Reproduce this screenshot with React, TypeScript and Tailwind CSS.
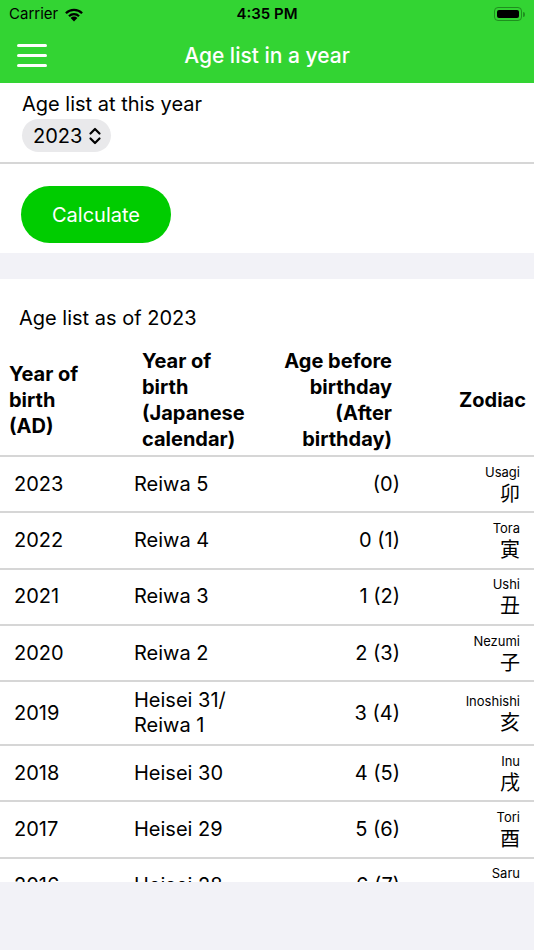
import React from "react";

type AgeRow = {
  ad: string;
  jp: string[];
  age: string;
  romaji: string;
  kanji: string;
};

const rows: AgeRow[] = [
  { ad: "2023", jp: ["Reiwa 5"], age: "(0)", romaji: "Usagi", kanji: "卯" },
  { ad: "2022", jp: ["Reiwa 4"], age: "0 (1)", romaji: "Tora", kanji: "寅" },
  { ad: "2021", jp: ["Reiwa 3"], age: "1 (2)", romaji: "Ushi", kanji: "丑" },
  { ad: "2020", jp: ["Reiwa 2"], age: "2 (3)", romaji: "Nezumi", kanji: "子" },
  { ad: "2019", jp: ["Heisei 31/", "Reiwa 1"], age: "3 (4)", romaji: "Inoshishi", kanji: "亥" },
  { ad: "2018", jp: ["Heisei 30"], age: "4 (5)", romaji: "Inu", kanji: "戌" },
  { ad: "2017", jp: ["Heisei 29"], age: "5 (6)", romaji: "Tori", kanji: "酉" },
  { ad: "2016", jp: ["Heisei 28"], age: "6 (7)", romaji: "Saru", kanji: "申" },
  { ad: "2015", jp: ["Heisei 27"], age: "7 (8)", romaji: "Hitsuji", kanji: "未" },
];

const font = "font-['Inter','Noto_Sans_CJK_JP',sans-serif]";

const StatusBar = () => (
  <div className="relative flex h-7 items-center px-[9px] text-[15px] text-black">
    <span className="flex items-center gap-[6px]">
      Carrier
      <svg width="20" height="15" viewBox="0 0 20 15">
        <path d="M10 14.5 6.6 10.9a4.8 4.8 0 0 1 6.8 0Z" fill="black" />
        <path d="M4.2 8.5a8.2 8.2 0 0 1 11.6 0l-1.6 1.6a5.9 5.9 0 0 0-8.4 0Z" fill="black" />
        <path d="M1.1 5.4a12.6 12.6 0 0 1 17.8 0l-1.6 1.6a10.3 10.3 0 0 0-14.6 0Z" fill="black" />
      </svg>
    </span>
    <span className="absolute left-1/2 -translate-x-1/2 font-semibold">4:35 PM</span>
    <span className="ml-auto flex items-center">
      <span className="flex h-[14px] w-[28px] items-center rounded-[4px] border border-[#1f8f1f] p-[2px]">
        <span className="h-full w-full rounded-[2px] bg-black" />
      </span>
      <span className="ml-[1px] h-[5px] w-[2px] rounded-r-sm bg-[#1f8f1f]" />
    </span>
  </div>
);

const NavBar = () => (
  <div className="relative flex h-[55px] items-center px-[17px]">
    <div className="flex w-[30px] flex-col gap-[7px]">
      <span className="h-[3px] rounded-full bg-white" />
      <span className="h-[3px] rounded-full bg-white" />
      <span className="h-[3px] rounded-full bg-white" />
    </div>
    <span className="absolute left-1/2 -translate-x-1/2 text-[21px] font-medium text-white">
      Age list in a year
    </span>
  </div>
);

const Zodiac = ({ romaji, kanji }: { romaji: string; kanji: string }) => (
  <div className="flex flex-col items-end">
    <span className="text-[13px] leading-[17px]">{romaji}</span>
    <span className="text-[20px] leading-[24px] font-['Noto_Sans_CJK_JP',sans-serif]">{kanji}</span>
  </div>
);

export default function App() {
  return (
    <div className={`flex h-[950px] w-[534px] flex-col overflow-hidden bg-[#f2f2f7] text-black ${font}`}>
      <div className="bg-[#33d433]">
        <StatusBar />
        <NavBar />
      </div>

      <div className="bg-white">
        <div className="px-[22px] pb-[10px] pt-[9px]">
          <div className="text-[20px] leading-[24px]">Age list at this year</div>
          <button
            type="button"
            className="mt-[3px] flex h-[33px] items-center gap-[6px] rounded-full bg-[#e9e9eb] pl-[11px] pr-[9px] text-[20px]"
          >
            2023
            <svg width="14" height="18" viewBox="0 0 14 18" fill="none" stroke="black" strokeWidth="2.2" strokeLinecap="round" strokeLinejoin="round">
              <path d="M2.5 6.5 7 2l4.5 4.5" />
              <path d="M2.5 11.5 7 16l4.5-4.5" />
            </svg>
          </button>
        </div>
        <div className="h-[2px] bg-[#d6d6d6]" />
        <div className="px-[21px] pb-[10px] pt-[22px]">
          <button
            type="button"
            className="h-[57px] w-[150px] rounded-full bg-[#00cc00] text-[20px] text-white"
          >
            Calculate
          </button>
        </div>
      </div>

      <div className="h-[26px]" />

      <div className="h-[603px] overflow-hidden bg-white">
        <div className="px-[19px] pt-[27px] text-[20px] leading-[24px]">Age list as of 2023</div>

        <div className="mt-[18px] flex items-center pb-[3px] text-[20px] font-bold leading-[26px]">
          <div className="w-[142px] pl-[9px]">
            Year of
            <br />
            birth
            <br />
            (AD)
          </div>
          <div className="w-[131px]">
            Year of
            <br />
            birth
            <br />
            (Japanese
            <br />
            calendar)
          </div>
          <div className="w-[119px] text-right">
            Age before
            <br />
            birthday
            <br />
            (After
            <br />
            birthday)
          </div>
          <div className="flex-1 pr-[8px] text-right">Zodiac</div>
        </div>
        <div className="h-[2px] bg-[#d6d6d6]" />

        {rows.map((row) => (
          <div key={row.ad}>
            <div className="flex min-h-[54.3px] items-center py-[6px] pl-[14px] pr-[14px] text-[20px] leading-[25px]">
              <div className="w-[120px]">{row.ad}</div>
              <div className="w-[140px]">
                {row.jp.map((line) => (
                  <div key={line}>{line}</div>
                ))}
              </div>
              <div className="w-[126px] text-right">{row.age}</div>
              <div className="flex-1">
                <Zodiac romaji={row.romaji} kanji={row.kanji} />
              </div>
            </div>
            <div className="h-[2px] bg-[#d6d6d6]" />
          </div>
        ))}
      </div>
    </div>
  );
}
